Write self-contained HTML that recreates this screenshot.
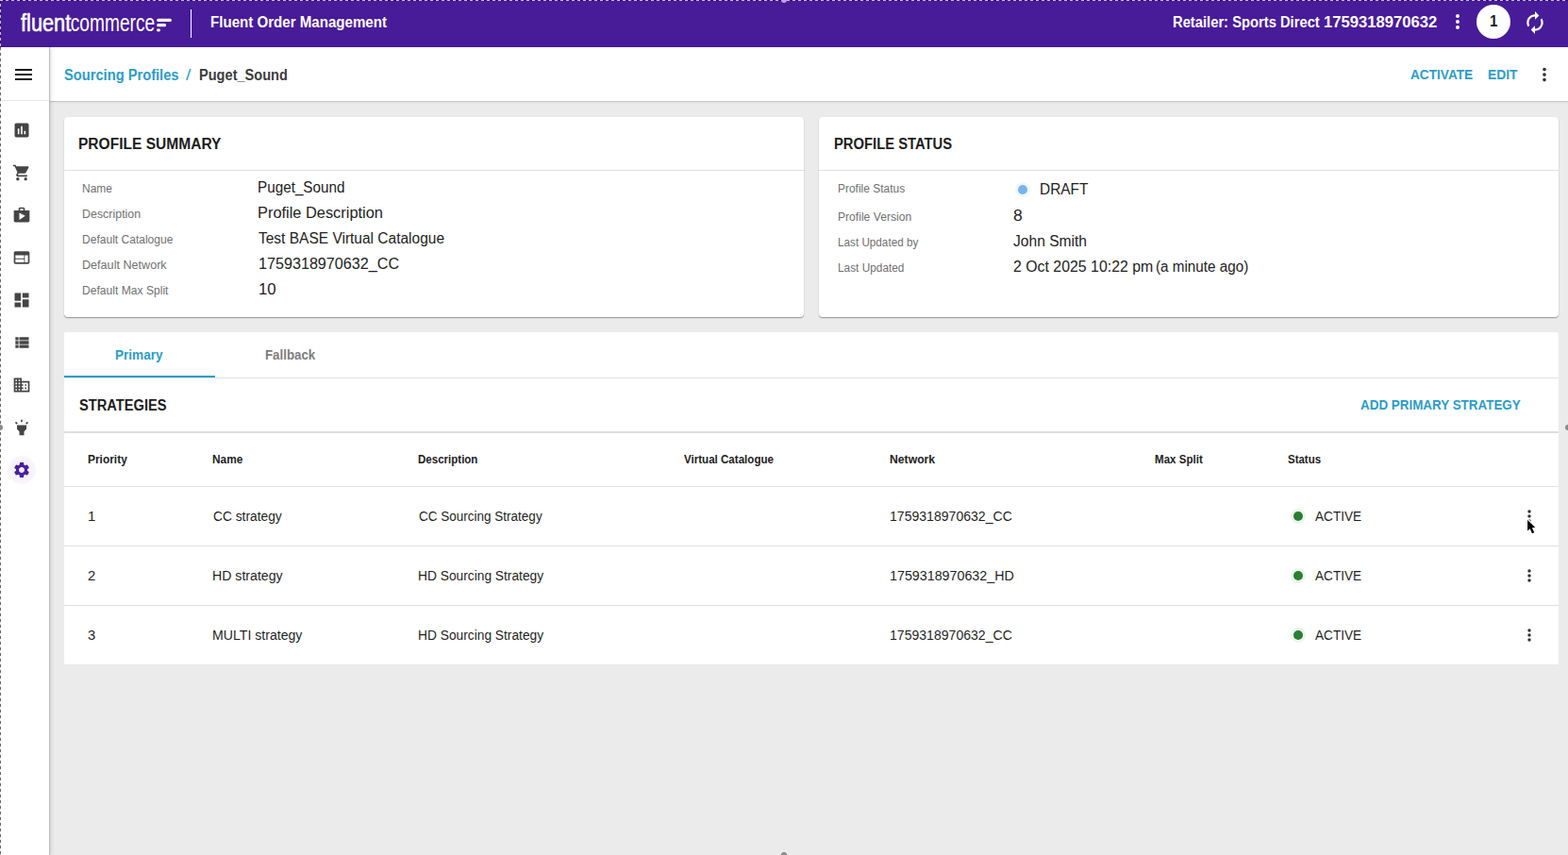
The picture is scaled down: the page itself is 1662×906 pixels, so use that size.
<!DOCTYPE html>
<html lang="en">
<head>
<meta charset="utf-8">
<title>Fluent Order Management - Sourcing Profiles - Puget_Sound</title>
<style>
*{box-sizing:border-box;margin:0;padding:0}
html,body{width:1662px;height:906px;overflow:hidden}
body{position:relative;background:#ebebeb;font-family:"Liberation Sans",Arial,sans-serif;color:#222}
.t{position:absolute;white-space:nowrap;line-height:1;display:block;transform-origin:0 50%}
#topbar{position:absolute;left:0;top:0;width:1662px;height:50px;background:#481b99}
#vdiv{position:absolute;left:201.5px;top:10px;width:1.5px;height:30px;background:#fff}
#avatar{position:absolute;left:1565px;top:5px;width:36px;height:36px;border-radius:50%;background:#fff}
#subbar{position:absolute;left:52px;top:50px;width:1610px;height:57px;background:#fff;box-shadow:0 1px 0 #c6c6c6,0 2px 2px rgba(0,0,0,.06)}
#sidebar{position:absolute;left:0;top:50px;width:52px;height:856px;background:#fff;box-shadow:1px 0 0 #bcbcbc,2px 0 4px rgba(0,0,0,.14)}
#sidebar .sep{position:absolute;left:0;top:56px;width:52px;height:1px;background:#e6e6e6}
#halo{position:absolute;left:8px;top:433px;width:30px;height:30px;border-radius:50%;background:radial-gradient(circle,rgba(170,110,220,.10) 0,rgba(170,110,220,.08) 60%,rgba(170,110,220,0) 100%)}
.card{position:absolute;background:#fff;border-radius:4px;box-shadow:0 1px 1px rgba(0,0,0,.3),0 1px 2px rgba(0,0,0,.09)}
.card.flat{border-radius:2px;box-shadow:none}
.hr{position:absolute;height:1px;background:#e0e0e0}
.dot{position:absolute;width:10px;height:10px;border-radius:50%}
svg{position:absolute;overflow:visible}
.ic path{fill:#454545}
</style>
</head>
<body>

<!-- top bar -->
<div id="topbar"></div>
<svg id="logo" style="left:22px;top:8px" width="164" height="32" viewBox="0 0 164 32">
  <g transform="translate(0,25.3) scale(.872,1)">
    <text x="0" y="0" font-family="Liberation Sans, Arial, sans-serif" font-size="25" fill="#fff" stroke="#fff" stroke-width=".55">fluent</text>
  </g>
  <g transform="translate(52.8,25.3) scale(.766,1)">
    <text x="0" y="0" font-family="Liberation Sans, Arial, sans-serif" font-size="25" fill="#fff">commerce</text>
  </g>
  <g fill="#fff">
    <rect x="144.200" y="11.800" width="15.700" height="3.100" rx="1.5"/>
    <rect x="144.200" y="17.100" width="9.900" height="3.100" rx="1.5"/>
    <rect x="144" y="22.500" width="4" height="2.900" rx="1.400"/>
  </g>
</svg>
<div id="vdiv"></div>
<svg style="left:1533px;top:11px" width="24" height="24" viewBox="0 0 24 24"><path fill="#fff" d="M12 8c1.1 0 2-.9 2-2s-.9-2-2-2-2 .9-2 2 .9 2 2 2zm0 2c-1.1 0-2 .9-2 2s.9 2 2 2 2-.9 2-2-.9-2-2-2zm0 6c-1.1 0-2 .9-2 2s.9 2 2 2 2-.9 2-2-.9-2-2-2z"/></svg>
<div id="avatar"></div>
<svg style="left:1613.600px;top:10.500px" width="26" height="26" viewBox="0 0 24 24"><path fill="#fff" d="M12 6v3l4-4-4-4v3c-4.42 0-8 3.58-8 8 0 1.57.46 3.03 1.24 4.26L6.7 14.8c-.45-.83-.7-1.79-.7-2.8 0-3.310 2.690-6 6-6zm6.760 1.740L17.300 9.200c.440.840.700 1.790.700 2.800 0 3.310-2.690 6-6 6v-3l-4 4 4 4v-3c4.420 0 8-3.580 8-8 0-1.570-.460-3.030-1.240-4.260z"/></svg>

<!-- sub bar + side bar -->
<div id="subbar"></div>
<svg style="left:1626px;top:68px" width="22" height="22" viewBox="0 0 24 24"><path fill="#333" d="M12 8c1.1 0 2-.9 2-2s-.9-2-2-2-2 .9-2 2 .9 2 2 2zm0 2c-1.1 0-2 .9-2 2s.9 2 2 2 2-.9 2-2-.9-2-2-2zm0 6c-1.1 0-2 .9-2 2s.9 2 2 2 2-.9 2-2-.9-2-2-2z"/></svg>
<div id="sidebar"><div class="sep"></div><div id="halo"></div></div>
<svg style="left:13px;top:67px" width="24" height="24" viewBox="0 0 24 24"><path fill="#1a1a1a" d="M3 18h18v-2H3v2zm0-5h18v-2H3v2zm0-7v2h18V6H3z"/></svg>
<svg class="ic" style="left:13px;top:128px" width="20" height="20" viewBox="0 0 24 24"><path d="M19 3H5c-1.1 0-2 .9-2 2v14c0 1.1.9 2 2 2h14c1.1 0 2-.9 2-2V5c0-1.1-.9-2-2-2zM9 17H7v-7h2v7zm4 0h-2V7h2v10zm4 0h-2v-4h2v4z"/></svg>
<svg class="ic" style="left:13px;top:173px" width="20" height="20" viewBox="0 0 24 24"><path d="M7 18c-1.1 0-1.99.9-1.99 2S5.9 22 7 22s2-.9 2-2-.9-2-2-2zM1 2v2h2l3.6 7.59-1.35 2.45c-.16.28-.25.61-.25.96 0 1.1.9 2 2 2h12v-2H7.42c-.14 0-.25-.11-.25-.25l.03-.12.9-1.630h7.450c.75 0 1.410-.410 1.750-1.030l3.580-6.490c.08-.14.12-.31.12-.48 0-.55-.45-1-1-1H5.210l-.94-2H1zm16 16c-1.1 0-1.990.9-1.990 2s.890 2 1.990 2 2-.9 2-2-.9-2-2-2z"/></svg>
<svg class="ic" style="left:13px;top:218px" width="20" height="20" viewBox="0 0 24 24"><path d="M16 6V4c0-1.110-.890-2-2-2h-4c-1.110 0-2 .890-2 2v2H2v13c0 1.110.890 2 2 2h16c1.110 0 2-.890 2-2V6h-6zm-6-2h4v2h-4V4zM9 18V9l7.500 4L9 18z"/></svg>
<svg class="ic" style="left:13px;top:263px" width="20" height="20" viewBox="0 0 24 24"><path d="M20 4H4c-1.1 0-1.990.9-1.990 2L2 18c0 1.1.9 2 2 2h16c1.1 0 2-.9 2-2V6c0-1.100-.9-2-2-2zm-5 14H4v-4h11v4zm0-5H4V9h11v4zm5 5h-4V9h4v9z"/></svg>
<svg class="ic" style="left:13px;top:308px" width="20" height="20" viewBox="0 0 24 24"><path d="M3 13h8V3H3v10zm0 8h8v-6H3v6zm10 0h8V11h-8v10zm0-18v6h8V3h-8z"/></svg>
<svg class="ic" style="left:13px;top:353px" width="20" height="20" viewBox="0 0 24 24"><path d="M4 14h4v-4H4v4zm0 5h4v-4H4v4zM4 9h4V5H4v4zm5 5h12v-4H9v4zm0 5h12v-4H9v4zM9 5v4h12V5H9z"/></svg>
<svg class="ic" style="left:13px;top:398px" width="20" height="20" viewBox="0 0 24 24"><path d="M12 7V3H2v18h20V7H12zM6 19H4v-2h2v2zm0-4H4v-2h2v2zm0-4H4V9h2v2zm0-4H4V5h2v2zm4 12H8v-2h2v2zm0-4H8v-2h2v2zm0-4H8V9h2v2zm0-4H8V5h2v2zm10 12h-8v-2h2v-2h-2v-2h2v-2h-2V9h8v10zm-2-8h-2v2h2v-2zm0 4h-2v2h2v-2z"/></svg>
<svg class="ic" style="left:13px;top:443px" width="20" height="20" viewBox="0 0 24 24"><path d="M6 14l3 3v5h6v-5l3-3V9H6v5zm5-12h2v3h-2V2zM3.500 5.875L4.914 4.460l2.120 2.122L5.620 7.997 3.500 5.875zm13.460.710l2.123-2.120 1.414 1.414L18.375 8l-1.414-1.414z"/></svg>
<svg style="left:13px;top:488px" width="20" height="20" viewBox="0 0 24 24"><path fill="#4a1fa0" d="M19.140 12.940c.04-.3.06-.61.06-.94 0-.32-.02-.64-.07-.94l2.030-1.580c.18-.14.23-.41.12-.61l-1.920-3.320c-.12-.22-.37-.29-.59-.22l-2.390.96c-.5-.38-1.030-.7-1.620-.94l-.36-2.540c-.04-.24-.24-.41-.48-.41h-3.840c-.24 0-.43.17-.47.41l-.36 2.540c-.59.24-1.130.57-1.620.94l-2.390-.96c-.22-.08-.47 0-.59.22L2.740 8.870c-.12.21-.08.47.12.61l2.030 1.580c-.05.3-.09.63-.09.94s.02.64.07.94l-2.030 1.580c-.18.14-.23.41-.12.61l1.920 3.320c.12.22.37.29.59.22l2.390-.96c.5.38 1.030.7 1.620.94l.36 2.540c.05.24.24.41.48.41h3.840c.24 0 .44-.17.47-.41l.36-2.540c.59-.24 1.130-.56 1.620-.94l2.390.96c.22.08.47 0 .59-.22l1.920-3.320c.12-.22.07-.47-.12-.61l-2.010-1.580zM12 15.600c-1.980 0-3.600-1.620-3.600-3.600s1.620-3.600 3.600-3.600 3.600 1.620 3.600 3.600-1.620 3.600-3.600 3.600z"/></svg>

<!-- cards -->
<div class="card" style="left:68px;top:124px;width:784px;height:212px"><div class="hr" style="left:0;right:0;top:56px"></div></div>
<div class="card" style="left:868px;top:124px;width:784px;height:212px"><div class="hr" style="left:0;right:0;top:56px"></div>
  <div class="dot" style="left:211px;top:72px;background:#78b4f0;box-shadow:0 0 0 3px rgba(120,180,240,.1)"></div>
</div>
<div class="card flat" style="left:68px;top:352px;width:1584px;height:352px">
  <div class="hr" style="left:0;right:0;top:48px;background:#e2e2e2"></div>
  <div style="position:absolute;left:0;top:46px;width:160px;height:2px;background:#2c9dc9"></div>
  <div class="hr" style="left:0;right:0;top:105px;height:2px;background:#dedede"></div>
  <div class="hr" style="left:0;right:0;top:163px"></div>
  <div class="hr" style="left:0;right:0;top:226px"></div>
  <div class="hr" style="left:0;right:0;top:289px"></div>
  <div class="dot" style="left:1303px;top:190px;background:#2a7f33;box-shadow:0 0 0 3px rgba(42,127,51,.08)"></div>
  <div class="dot" style="left:1303px;top:253px;background:#2a7f33;box-shadow:0 0 0 3px rgba(42,127,51,.08)"></div>
  <div class="dot" style="left:1303px;top:316px;background:#2a7f33;box-shadow:0 0 0 3px rgba(42,127,51,.08)"></div>
  <svg style="left:1543px;top:185px" width="20" height="20" viewBox="0 0 24 24"><path fill="#333" d="M12 8c1.1 0 2-.9 2-2s-.9-2-2-2-2 .9-2 2 .9 2 2 2zm0 2c-1.1 0-2 .9-2 2s.9 2 2 2 2-.9 2-2-.9-2-2-2zm0 6c-1.1 0-2 .9-2 2s.9 2 2 2 2-.9 2-2-.9-2-2-2z"/></svg>
  <svg style="left:1543px;top:248px" width="20" height="20" viewBox="0 0 24 24"><path fill="#333" d="M12 8c1.1 0 2-.9 2-2s-.9-2-2-2-2 .9-2 2 .9 2 2 2zm0 2c-1.1 0-2 .9-2 2s.9 2 2 2 2-.9 2-2-.9-2-2-2zm0 6c-1.1 0-2 .9-2 2s.9 2 2 2 2-.9 2-2-.9-2-2-2z"/></svg>
  <svg style="left:1543px;top:311px" width="20" height="20" viewBox="0 0 24 24"><path fill="#333" d="M12 8c1.1 0 2-.9 2-2s-.9-2-2-2-2 .9-2 2 .9 2 2 2zm0 2c-1.1 0-2 .9-2 2s.9 2 2 2 2-.9 2-2-.9-2-2-2zm0 6c-1.1 0-2 .9-2 2s.9 2 2 2 2-.9 2-2-.9-2-2-2z"/></svg>
</div>

<div style="position:absolute;left:0;top:0;width:1662px;height:1px;background:repeating-linear-gradient(90deg,#c9b8e6 0 3px,#2e1268 3px 6px)"></div>
<div style="position:absolute;left:0;top:1px;width:1px;height:49px;background:repeating-linear-gradient(180deg,#2e1268 0 3px,#c9b8e6 3px 6px)"></div>
<div style="position:absolute;left:0;top:50px;width:1px;height:856px;background:repeating-linear-gradient(180deg,#6a6a6a 0 3px,#ececec 3px 6px)"></div>
<svg style="left:1616px;top:548px" width="14" height="20" viewBox="0 0 14 20"><path d="M3.100 2.900V14.600L5.700 12.200 8 17.200 10.200 16.200 7.900 11.300 11.300 11.100z" fill="#000" stroke="#fff" stroke-width="2.400" stroke-linejoin="round" paint-order="stroke"/></svg>
<div style="position:absolute;left:-3px;top:450px;width:6px;height:6px;border-radius:50%;background:#8a8a8a"></div>
<div style="position:absolute;left:1659px;top:450px;width:6px;height:6px;border-radius:50%;background:#8a8a8a"></div>
<div style="position:absolute;left:828px;top:-3px;width:6px;height:6px;border-radius:50%;background:#b9a7dd"></div>
<div style="position:absolute;left:828px;top:903px;width:6px;height:6px;border-radius:50%;background:#8a8a8a"></div>
<!-- text -->
<span class="t" style="left:222.5px;top:16px;font-size:16px;transform:scaleX(0.9431);font-weight:700;color:#fff">Fluent Order Management</span>
<span class="t" style="left:1242.6px;top:16px;font-size:16px;transform:scaleX(0.9220);font-weight:700;color:#fff">Retailer: Sports Direct</span>
<span class="t" style="left:1402.5px;top:16px;font-size:16px;transform:scaleX(1.0396);font-weight:700;color:#fff">1759318970632</span>
<span class="t" style="left:1578.5px;top:15px;font-size:16px;transform:scaleX(0.9496);font-weight:700;color:#1c1c1c">1</span>
<span class="t" style="left:67.8px;top:72px;font-size:16px;transform:scaleX(0.9173);font-weight:700;color:#2c9dc9">Sourcing Profiles</span>
<span class="t" style="left:196.8px;top:72px;font-size:16px;transform:scaleX(1.2018);color:#2c9dc9">/</span>
<span class="t" style="left:210.5px;top:72px;font-size:16px;transform:scaleX(0.9109);font-weight:700;color:#3c3c3c">Puget_Sound</span>
<span class="t" style="left:1495.3px;top:72px;font-size:14px;transform:scaleX(0.9736);font-weight:700;color:#2c9dc9">ACTIVATE</span>
<span class="t" style="left:1576.6px;top:72px;font-size:14px;transform:scaleX(0.9864);font-weight:700;color:#2c9dc9">EDIT</span>
<span class="t" style="left:83.0px;top:145px;font-size:16px;transform:scaleX(0.9719);font-weight:700;color:#1c1c1c">PROFILE SUMMARY</span>
<span class="t" style="left:87.0px;top:194px;font-size:12px;transform:scaleX(0.9968);color:#707070">Name</span>
<span class="t" style="left:273.4px;top:191px;font-size:16px;transform:scaleX(0.9538);color:#222">Puget_Sound</span>
<span class="t" style="left:87.0px;top:221px;font-size:12px;transform:scaleX(1.0364);color:#707070">Description</span>
<span class="t" style="left:273.1px;top:218px;font-size:16px;transform:scaleX(1.0239);color:#222">Profile Description</span>
<span class="t" style="left:87.0px;top:248px;font-size:12px;transform:scaleX(1.0035);color:#707070">Default Catalogue</span>
<span class="t" style="left:274.2px;top:245px;font-size:16px;transform:scaleX(0.9687);color:#222">Test BASE Virtual Catalogue</span>
<span class="t" style="left:86.8px;top:275px;font-size:12px;transform:scaleX(1.0501);color:#707070">Default Network</span>
<span class="t" style="left:274.0px;top:272px;font-size:16px;transform:scaleX(1.0094);color:#222">1759318970632_CC</span>
<span class="t" style="left:86.8px;top:302px;font-size:12px;transform:scaleX(1.0086);color:#707070">Default Max Split</span>
<span class="t" style="left:273.9px;top:299px;font-size:16px;transform:scaleX(1.0467);color:#222">10</span>
<span class="t" style="left:883.6px;top:145px;font-size:16px;transform:scaleX(0.9234);font-weight:700;color:#1c1c1c">PROFILE STATUS</span>
<span class="t" style="left:887.6px;top:194px;font-size:12px;transform:scaleX(0.9971);color:#707070">Profile Status</span>
<span class="t" style="left:1101.8px;top:193px;font-size:16px;transform:scaleX(0.9636);color:#222">DRAFT</span>
<span class="t" style="left:887.6px;top:224px;font-size:12px;transform:scaleX(1.0104);color:#707070">Profile Version</span>
<span class="t" style="left:1073.7px;top:221px;font-size:16px;transform:scaleX(1.0976);color:#222">8</span>
<span class="t" style="left:887.6px;top:251px;font-size:12px;transform:scaleX(0.9758);color:#707070">Last Updated by</span>
<span class="t" style="left:1073.7px;top:248px;font-size:16px;transform:scaleX(0.9747);color:#222">John Smith</span>
<span class="t" style="left:887.6px;top:278px;font-size:12px;transform:scaleX(0.9870);color:#707070">Last Updated</span>
<span class="t" style="left:1073.7px;top:275px;font-size:16px;transform:scaleX(0.9924);color:#222">2 Oct 2025 10:22 pm</span>
<span class="t" style="left:1224.6px;top:275px;font-size:16px;transform:scaleX(0.9523);color:#222">(a minute ago)</span>
<span class="t" style="left:122.2px;top:369px;font-size:14px;transform:scaleX(0.9698);font-weight:700;color:#2c9dc9">Primary</span>
<span class="t" style="left:281.0px;top:369px;font-size:14px;transform:scaleX(0.9498);font-weight:700;color:#7d7d7d">Fallback</span>
<span class="t" style="left:83.8px;top:422px;font-size:16px;transform:scaleX(0.9159);font-weight:700;color:#1c1c1c">STRATEGIES</span>
<span class="t" style="left:1441.9px;top:422px;font-size:14px;transform:scaleX(0.9584);font-weight:700;color:#2c9dc9">ADD PRIMARY STRATEGY</span>
<span class="t" style="left:92.7px;top:481px;font-size:12px;transform:scaleX(0.9945);font-weight:700;color:#222">Priority</span>
<span class="t" style="left:225.0px;top:481px;font-size:12px;transform:scaleX(0.9885);font-weight:700;color:#222">Name</span>
<span class="t" style="left:443.3px;top:481px;font-size:12px;transform:scaleX(0.9606);font-weight:700;color:#222">Description</span>
<span class="t" style="left:724.8px;top:481px;font-size:12px;transform:scaleX(0.9643);font-weight:700;color:#222">Virtual Catalogue</span>
<span class="t" style="left:942.5px;top:481px;font-size:12px;transform:scaleX(1.0162);font-weight:700;color:#222">Network</span>
<span class="t" style="left:1223.9px;top:481px;font-size:12px;transform:scaleX(0.9630);font-weight:700;color:#222">Max Split</span>
<span class="t" style="left:1365.1px;top:481px;font-size:12px;transform:scaleX(0.9570);font-weight:700;color:#222">Status</span>
<span class="t" style="left:93.1px;top:540px;font-size:14px;transform:scaleX(1.0550);color:#1f1f1f">1</span>
<span class="t" style="left:225.5px;top:540px;font-size:14px;transform:scaleX(0.9833);color:#1f1f1f">CC strategy</span>
<span class="t" style="left:443.5px;top:540px;font-size:14px;transform:scaleX(0.9649);color:#1f1f1f">CC Sourcing Strategy</span>
<span class="t" style="left:942.8px;top:540px;font-size:14px;transform:scaleX(1.0046);color:#1f1f1f">1759318970632_CC</span>
<span class="t" style="left:1394.1px;top:540px;font-size:14px;transform:scaleX(0.9726);color:#1f1f1f">ACTIVE</span>
<span class="t" style="left:92.6px;top:603px;font-size:14px;transform:scaleX(1.0618);color:#1f1f1f">2</span>
<span class="t" style="left:224.5px;top:603px;font-size:14px;transform:scaleX(1.0096);color:#1f1f1f">HD strategy</span>
<span class="t" style="left:442.6px;top:603px;font-size:14px;transform:scaleX(0.9833);color:#1f1f1f">HD Sourcing Strategy</span>
<span class="t" style="left:942.8px;top:603px;font-size:14px;transform:scaleX(1.0201);color:#1f1f1f">1759318970632_HD</span>
<span class="t" style="left:1394.1px;top:603px;font-size:14px;transform:scaleX(0.9726);color:#1f1f1f">ACTIVE</span>
<span class="t" style="left:92.6px;top:666px;font-size:14px;transform:scaleX(1.0547);color:#1f1f1f">3</span>
<span class="t" style="left:224.5px;top:666px;font-size:14px;transform:scaleX(1.0082);color:#1f1f1f">MULTI strategy</span>
<span class="t" style="left:442.6px;top:666px;font-size:14px;transform:scaleX(0.9833);color:#1f1f1f">HD Sourcing Strategy</span>
<span class="t" style="left:942.8px;top:666px;font-size:14px;transform:scaleX(1.0046);color:#1f1f1f">1759318970632_CC</span>
<span class="t" style="left:1394.1px;top:666px;font-size:14px;transform:scaleX(0.9726);color:#1f1f1f">ACTIVE</span>

</body>
</html>
